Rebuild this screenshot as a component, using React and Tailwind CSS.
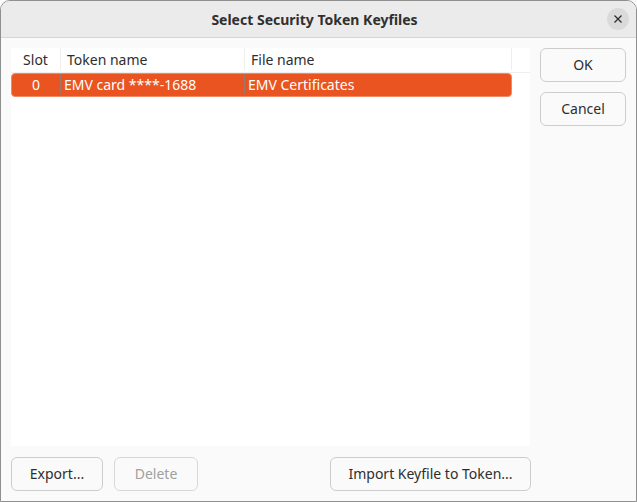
import React from "react";

export default function App() {
  const font = { fontFamily: "'Noto Sans', 'Open Sans', sans-serif" };
  return (
    <div className="w-[637px] h-[502px] bg-[#fafafa]" style={font}>
      <div className="w-full h-full flex flex-col rounded-t-[10px] border border-[#8f8f8f] overflow-hidden bg-[#fafafa]">
        <div className="h-[37px] shrink-0 bg-[#ebebeb] border-b border-[#d6d6d6] relative flex items-center justify-center">
          <span className="text-[14px] font-bold text-[#303030] pl-[-4px] mr-[8px]">Select Security Token Keyfiles</span>
          <div className="absolute right-[7px] top-[7px] w-[22px] h-[22px] rounded-full bg-[#dadada] flex items-center justify-center">
            <svg width="8" height="8" viewBox="0 0 8 8"><path d="M0.5 0.5 L7.5 7.5 M7.5 0.5 L0.5 7.5" stroke="#2e2e2e" strokeWidth="1.3" /></svg>
          </div>
        </div>
        <div className="flex-1 flex flex-col px-[10px] pt-[10px] pb-[10px]">
          <div className="flex-1 flex gap-[10px]">
            <div className="flex-1 bg-white flex flex-col">
              <div className="h-[25px] flex text-[14px] text-[#2e2e2e] border-b border-[#efefef] pb-[2px]">
                <div className="w-[50px] border-r border-[#eeeeee] flex items-center justify-center">Slot</div>
                <div className="w-[184px] border-r border-[#eeeeee] flex items-center pl-[6px]">Token name</div>
                <div className="w-[267px] border-r border-[#eeeeee] flex items-center pl-[6px]">File name</div>
                <div className="flex-1"></div>
              </div>
              <div className="h-[24px] w-[501px] flex text-[14px] text-white bg-[#e95420] rounded-[4px] border border-[#f08a66] pb-[2px]">
                <div className="w-[49px] border-r border-[#9a7a70] flex items-center justify-center">0</div>
                <div className="w-[184px] border-r border-[#9a7a70] flex items-center pl-[3px]">EMV card ****-1688</div>
                <div className="flex-1 flex items-center pl-[3px]">EMV Certificates</div>
              </div>
            </div>
            <div className="w-[86px] flex flex-col gap-[10px]">
              <button className="h-[34px] pb-[2px] rounded-[6px] border border-[#cdcdcd] bg-[#fafafa] text-[14px] text-[#2e2e2e]">OK</button>
              <button className="h-[34px] pb-[2px] rounded-[6px] border border-[#cdcdcd] bg-[#fafafa] text-[14px] text-[#2e2e2e]">Cancel</button>
            </div>
          </div>
          <div className="flex mt-[11px] w-[520px]">
            <button className="w-[92px] h-[34px] pb-[2px] rounded-[6px] border border-[#cdcdcd] bg-[#fafafa] text-[14px] text-[#2e2e2e]">Export...</button>
            <button className="ml-[11px] w-[84px] h-[34px] pb-[2px] rounded-[6px] border border-[#d8d8d8] bg-[#fafafa] text-[14px] text-[#a0a0a0]">Delete</button>
            <div className="flex-1"></div>
            <button className="w-[201px] h-[34px] pb-[2px] rounded-[6px] border border-[#cdcdcd] bg-[#fafafa] text-[14px] text-[#2e2e2e]">Import Keyfile to Token...</button>
          </div>
        </div>
      </div>
    </div>
  );
}
